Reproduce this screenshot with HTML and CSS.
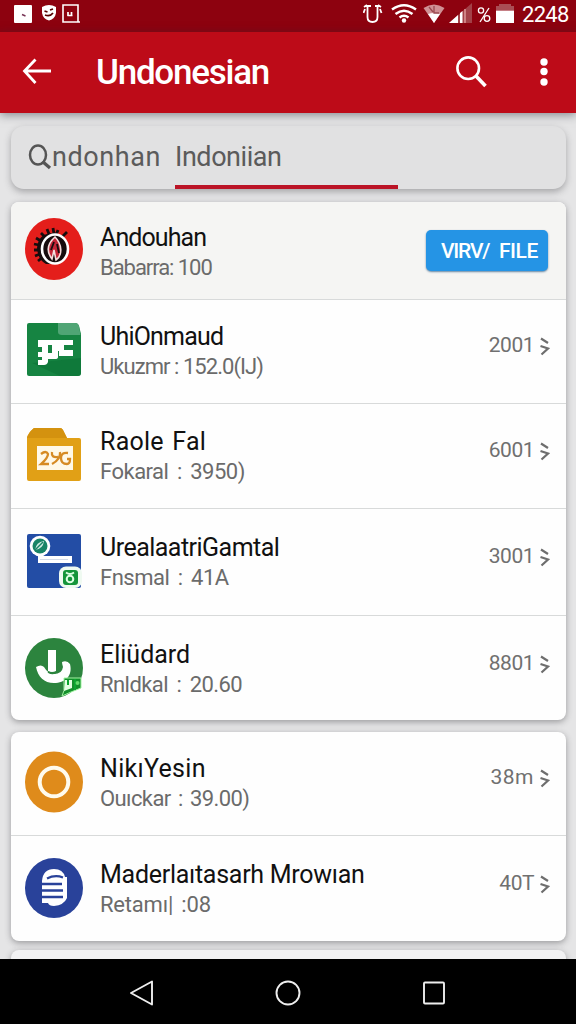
FILE: index.html
```html
<!DOCTYPE html>
<html lang="id">
<head>
<meta charset="utf-8">
<title>Undonesian</title>
<link rel="stylesheet" href="styles.css">
</head>
<body>
<div class="screen">
  <header class="statusbar">
    <svg class="status-left" width="82" height="32" viewBox="0 0 82 32">
      <rect x="14" y="5" width="18" height="18" rx="1" fill="#fff"/>
      <path d="M22 14.500l3.500 1.500" stroke="#735" stroke-width="1.400"/>
      <path d="M42 7q7-4 14 0v6q-1 6-7 7.500q-6-1.500-7-7.500z" fill="#fff"/>
      <path d="M44.500 11l3 1M50 10l3-1M45 15q5 2 8-2" stroke="#500" stroke-width="1.700" fill="none"/>
      <path d="M63 5h15v17H63zM77 22h3" fill="none" stroke="#fff" stroke-width="1.600"/>
      <path d="M68 12v4M71.500 12v4M67.500 15.500h5" fill="none" stroke="#fff" stroke-width="1.700"/>
    </svg>
    <div class="status-right">
      <svg width="156" height="32" viewBox="362 0 156 32">
        <path d="M366.500 6v11q0 5 5 5t5-5V6M365 6h5M374 6h4M364 9l-1.500 4M379 9l1.500 4M363 7l3-2M380 7l-3-2" fill="none" stroke="#fff" stroke-width="1.800"/>
        <g fill="none" stroke="#fff" stroke-width="2.500">
          <path d="M391 9.500q12-8.500 24 0M394.500 14q8.500-6.500 17 0M398.500 17.500q4.500-3.500 9 0"/>
        </g>
        <circle cx="403" cy="20.500" r="2.200" fill="#fff"/>
        <path d="M422.500 8q10.500-7 21 0L433 23z" fill="#d09195"/>
        <path d="M427 14q6-2 12 0L433 23z" fill="#fff"/>
        <path d="M433 6v7h5M428 7l4 5" fill="none" stroke="#9a4a50" stroke-width="1.300"/>
        <path d="M448 23L471 3v20z" fill="#a34148"/>
        <path d="M448 23l9-8v8zM459 13l2.500-2v12H459z" fill="#fff"/>
        <path d="M464 9v14" stroke="#d99" stroke-width="1.500"/>
        <g fill="none" stroke="#fff" stroke-width="1.300"><circle cx="480" cy="10.500" r="2.600"/><circle cx="486" cy="18.500" r="2.800"/><path d="M488 8l-9 14"/></g>
        <path d="M495 8V6h3V4h12v2h3v4h-18z" fill="#a94e55"/>
        <rect x="495" y="10.500" width="18" height="12.500" fill="#fff"/>
      </svg>
      <span class="clock">2248</span>
    </div>
  </header>
  <div class="appbar">
    <svg class="back" width="30" height="30" viewBox="0 0 30 30"><path d="M13.500 2.500L2.500 14 13.500 26M2.500 14H29" fill="none" stroke="#fff" stroke-width="2.800"/></svg>
    <h1 class="apptitle">Undonesian</h1>
    <svg class="find" width="34" height="34" viewBox="0 0 34 34"><circle cx="13.200" cy="13.200" r="10.800" fill="none" stroke="#fff" stroke-width="2.600"/><path d="M20.500 20.500l10 10.500" stroke="#fff" stroke-width="3.600"/></svg>
    <svg class="more" width="10" height="30" viewBox="0 0 10 30" fill="#fff"><circle cx="5" cy="5" r="3.700"/><circle cx="5" cy="14.500" r="3.700"/><circle cx="5" cy="25" r="3.700"/></svg>
  </div>

  <main class="content">
    <div class="searchbar">
      <svg class="lens" width="24" height="26" viewBox="0 0 24 26"><ellipse cx="10" cy="11" rx="8" ry="9.500" fill="none" stroke="#555" stroke-width="2.500"/><path d="M14.500 17.500l7.500 6.500" stroke="#555" stroke-width="3.300"/></svg>
      <span class="query">ndonhan</span>
      <span class="tab">Indoniian</span>
    </div>

    <section class="card">
      <div class="row row-first">
        <svg class="icon" width="60" height="64" viewBox="0 0 60 64">
          <ellipse cx="30" cy="32" rx="29" ry="31" fill="#e41e1b"/>
          <path d="M34 13l-2 5M29 11l1 6M23 12l2 5M17 16l4 4M12 21l5 3M10 27l5 1M10 33h5M11 39l5-2M14 44l5-4M43 15l-5 5" stroke="#160d0e" stroke-width="2.800"/>
          <path d="M30 16q-16 0-17 15 1 12 9 16h8z" fill="#160d0e"/>
          <ellipse cx="31" cy="32" rx="13" ry="14.500" fill="#160d0e" stroke="#fff" stroke-width="2.600"/>
          <path d="M31 20c-8 7-9 14-3 22l2-9 2 10c7-5 6-16-1-23z" fill="#c32436" stroke="#f5dcdc" stroke-width="1.600"/>
          <path d="M30 25l-3 8M33 27l2 9" stroke="#160d0e" stroke-width="1.800"/>
        </svg>
        <div class="texts"><div class="name n1">Andouhan</div><div class="sub s1">Babarra: 100</div></div>
        <button class="viewfile"><span class="view">VIRV/</span><span>FILE</span></button>
      </div>
      <div class="row">
        <svg class="icon" width="60" height="64" viewBox="0 0 60 64">
          <path d="M5 5h46q3 0 4 3l2 8v39q0 3-3 3H5q-2 0-2-2V7q0-2 2-2z" fill="#168442"/>
          <path d="M34 5h17q3 0 4 3l1.500 9H38q-4 0-4-3z" fill="#50a575"/>
          <path d="M8 45l28 13h18q3 0 3-3V40z" fill="#0b7136" opacity=".6"/>
          <path d="M14 22h20v17q0 2-3 2h-7v3q-1 3-4 3h-6v-5h4v-3h-4v-5h4v-5h-4zM24 27v8h4v-8z" fill="#fff"/>
          <path d="M33 22h16v5H40v5h9v6H35v-5h-2z" fill="#fff"/>
        </svg>
        <div class="texts"><div class="name n2">UhiOnmaud</div><div class="sub s2">Ukuzmr : 152.0(IJ)</div></div>
        <div class="amount">2001<svg class="chev" width="10" height="20" viewBox="0 0 10 20"><path d="M1 1.500l7 4.500M.5 9l7.500 2.500-6.500 6" fill="none" stroke="#6e6e6e" stroke-width="2.200"/></svg></div>
      </div>
      <div class="row">
        <svg class="icon" width="60" height="64" viewBox="0 0 60 64">
          <path d="M10 5h26q2 0 3 2l4 8h12q2 0 2 2v39q0 2-2 2H5q-2 0-2-2V15q1-5 7-10z" fill="#e1a016"/>
          <path d="M10 5h26q2 0 3 2l4 8H3q1-5 7-10z" fill="#d4920f"/>
          <rect x="13" y="23" width="36" height="24" fill="#fff9e8"/>
          <path d="M17 31q5-4 7 0 0 4-7 10h8M28 29q-1 6 6 5M36 29q1 7-8 12M44 30q-7-1-7 5t6 6q3 0 3-5h-3" fill="none" stroke="#d68b24" stroke-width="2.300"/>
        </svg>
        <div class="texts"><div class="name n3">Raole Fal</div><div class="sub s3">Fokaral : 3950)</div></div>
        <div class="amount">6001<svg class="chev" width="10" height="20" viewBox="0 0 10 20"><path d="M1 1.500l7 4.500M.5 9l7.500 2.500-6.500 6" fill="none" stroke="#6e6e6e" stroke-width="2.200"/></svg></div>
      </div>
      <div class="row row-tall">
        <svg class="icon" width="60" height="64" viewBox="0 0 60 64">
          <rect x="3" y="5" width="54" height="54" rx="2" fill="#234da5"/>
          <path d="M14 27h34v7H14z" fill="#fff"/><path d="M16 30.500h28" stroke="#d4dbe8" stroke-width="1.200"/>
          <circle cx="16" cy="17" r="10.300" fill="#fff"/><circle cx="16" cy="17" r="7.500" fill="#198466"/><path d="M11 21q1-8 9-9-1 8-9 9" fill="#d2ebe3"/><path d="M11 21l8-8" stroke="#198466" stroke-width="1.500"/>
          <rect x="35" y="37.500" width="23" height="21.500" rx="7" fill="#effaf1"/>
          <rect x="39" y="41" width="15" height="15" rx="3" fill="#14953a"/><circle cx="46" cy="50" r="3.300" fill="none" stroke="#dcffe3" stroke-width="2"/><path d="M42 43.500q4 3 8 0" stroke="#dcffe3" stroke-width="1.800" fill="none"/>
        </svg>
        <div class="texts"><div class="name n4">UrealaatriGamtal</div><div class="sub s4">Fnsmal : 41A</div></div>
        <div class="amount">3001<svg class="chev" width="10" height="20" viewBox="0 0 10 20"><path d="M1 1.500l7 4.500M.5 9l7.500 2.500-6.500 6" fill="none" stroke="#6e6e6e" stroke-width="2.200"/></svg></div>
      </div>
      <div class="row row-last">
        <svg class="icon" width="60" height="64" viewBox="0 0 60 64">
          <ellipse cx="30" cy="32" rx="29" ry="30" fill="#2c843e"/>
          <path d="M12 31q5-3 8 0 4 7 10 7 8 0 9-7-1-3-1-5 5-2 8 2c3 12-5 19-16 19-10 0-16-6-18-16z" fill="#fff"/>
          <path d="M24 14h8v21q-4 2-8 0z" fill="#fff"/><path d="M33 24v12q-4 3-9 0" fill="none" stroke="#2c843e" stroke-width="1.500"/>
          <path d="M40 42h17v10l-10 4-9 4q3-6 2-10z" fill="#13902b" stroke="#a2f3a2" stroke-width="1"/>
          <path d="M41 44h7v8l-8 3z" fill="#e4ffe3"/><path d="M44 44v5M51 43v11" stroke="#0ba630" stroke-width="2"/><circle cx="53.500" cy="47" r="2" fill="#62d96b"/>
        </svg>
        <div class="texts"><div class="name n5">Eliüdard</div><div class="sub s5">Rnldkal : 20.60</div></div>
        <div class="amount">8801<svg class="chev" width="10" height="20" viewBox="0 0 10 20"><path d="M1 1.500l7 4.500M.5 9l7.500 2.500-6.500 6" fill="none" stroke="#6e6e6e" stroke-width="2.200"/></svg></div>
      </div>
    </section>

    <section class="card">
      <div class="row row-sixth">
        <svg class="icon" width="60" height="64" viewBox="0 0 60 64"><ellipse cx="30" cy="32" rx="29" ry="30.500" fill="#df8b1b"/><circle cx="30" cy="32" r="14.300" fill="none" stroke="#fffbed" stroke-width="4"/></svg>
        <div class="texts"><div class="name n6">NikıYesin</div><div class="sub s6">Ouıckar : 39.00)</div></div>
        <div class="amount wide">38m<svg class="chev" width="10" height="20" viewBox="0 0 10 20"><path d="M1 1.500l7 4.500M.5 9l7.500 2.500-6.500 6" fill="none" stroke="#6e6e6e" stroke-width="2.200"/></svg></div>
      </div>
      <div class="row row-last">
        <svg class="icon" width="60" height="64" viewBox="0 0 60 64">
          <ellipse cx="30" cy="32" rx="29" ry="30" fill="#29429a"/>
          <path d="M18 25q1-12 12-12 9 0 11 8h2v21q-3 7-13 8-5 0-6-3h-6z" fill="#fff"/>
          <path d="M23 22.500q8-4 16-1M18 28h20M18 34.500h21M18 41h21" stroke="#29429a" stroke-width="2.300" fill="none"/>
        </svg>
        <div class="texts"><div class="name n7">Maderlaıtasarh Mrowıan</div><div class="sub s7">Retamı| :08</div></div>
        <div class="amount">40T<svg class="chev" width="10" height="20" viewBox="0 0 10 20"><path d="M1 1.500l7 4.500M.5 9l7.500 2.500-6.500 6" fill="none" stroke="#6e6e6e" stroke-width="2.200"/></svg></div>
      </div>
    </section>
    <section class="card card-peek"></section>
  </main>

  <nav class="navbar">
    <svg width="24" height="26" viewBox="0 0 24 26"><path d="M22 1.500v23L1 13z" fill="none" stroke="#eee" stroke-width="1.900" stroke-linejoin="round"/></svg>
    <svg width="26" height="26" viewBox="0 0 26 26"><circle cx="13" cy="13" r="11.500" fill="none" stroke="#eee" stroke-width="1.900"/></svg>
    <svg width="24" height="26" viewBox="0 0 24 26"><rect x="2" y="2.500" width="20" height="21" rx="1" fill="none" stroke="#eee" stroke-width="1.900"/></svg>
  </nav>
</div>
</body>
</html>
```
FILE: styles.css
```css
* { box-sizing: border-box; }
body { margin: 0; font-family: Roboto, "Liberation Sans", sans-serif; }
.screen { width: 576px; height: 1024px; display: flex; flex-direction: column; overflow: hidden; background: #e5e5e6; }
svg { display: block; flex: none; }

.statusbar { height: 32px; flex: none; display: flex; justify-content: space-between; background: #8d020f; color: #fff; }
.status-right { display: flex; gap: 3px; padding-right: 7px; }
.clock { width: 47px; font-size: 22px; line-height: 30px; letter-spacing: -0.7px; }

.appbar { position: relative; z-index: 1; height: 81px; flex: none; display: flex; align-items: center; padding: 0 27px 2px 22px; background: #bd0b18; box-shadow: 0 2px 9px rgba(40, 45, 55, .5); }
.apptitle { margin: 2px 0 0 44px; flex: 1; color: #fff; font-size: 35px; font-weight: 500; line-height: 42px; letter-spacing: -1.25px; }
.find { margin-right: 50px; }

.content { flex: 1; min-height: 0; overflow: hidden; display: flex; flex-direction: column; padding: 13px 11px 0; }
.searchbar { width: 555px; height: 63px; flex: none; display: flex; padding-left: 17px; margin-bottom: 13px; border-radius: 13px; background: #e1e1e2; box-shadow: 0 3px 7px rgba(50, 50, 55, .35); color: #5b5b5b; font-size: 27px; line-height: 62px; }
.lens { margin-top: 18px; }
.query { width: 123px; letter-spacing: 0.6px; }
.tab { width: 223px; height: 63px; border-bottom: 4px solid #bb1427; letter-spacing: -0.45px; }

.card { width: 555px; flex: none; margin-bottom: 12px; border-radius: 8px; background: #fefefe; box-shadow: 0 2px 6px rgba(50, 50, 55, .42); overflow: hidden; }
.card-peek { height: 30px; margin-top: -3px; background: #f2f2f3; }
.row { height: 104px; display: flex; padding: 18px 16px 0 13px; border-bottom: 1.5px solid #d8dada; }
.row-first { height: 98px; padding-top: 15px; background: #f5f5f3; }
.row-tall { height: 107px; padding-top: 20px; }
.row:nth-child(3) { height: 105px; padding-top: 19px; }
.row-last { height: 104px; padding-top: 20px; border-bottom: 0; }
.row-sixth + .row-last { height: 105px; }
.texts { flex: 1; margin: 4px 0 0 16px; white-space: nowrap; }
.row-first .texts { margin-top: 6px; }
.name { color: #111; font-size: 25px; line-height: 30px; letter-spacing: -0.4px; }
.sub { color: #6b6b6b; font-size: 22px; line-height: 29px; letter-spacing: -0.7px; }
.n1 { letter-spacing: -0.9px; }
.n2 { letter-spacing: -0.8px; }
.n3 { letter-spacing: 0.25px; word-spacing: 2px; }
.n4 { letter-spacing: -0.52px; }
.n5 { letter-spacing: 0; }
.n6 { letter-spacing: 0.3px; }
.n7 { letter-spacing: -0.27px; }
.s1 { letter-spacing: -1.05px; }
.s2 { letter-spacing: -0.95px; }
.s3, .s4 { letter-spacing: -0.5px; word-spacing: 3.5px; }
.s5 { letter-spacing: -0.55px; word-spacing: 3.5px; }
.s6 { letter-spacing: -0.6px; word-spacing: 2.5px; }
.s7 { letter-spacing: -0.2px; word-spacing: 3px; }
.amount { display: flex; align-items: flex-start; gap: 6px; color: #707070; font-size: 21px; line-height: 24px; letter-spacing: -0.5px; padding-top: 15px; }
.wide { letter-spacing: 0.5px; }
.chev { margin-top: 4px; }
.viewfile { width: 122px; height: 41px; display: flex; align-items: center; justify-content: space-between; padding: 0 10px 0 15px; margin: 13px 2px 0 0; border: 0; border-radius: 5px; background: #2594e5; box-shadow: 0 1px 2px rgba(0, 60, 110, .6); color: #fff; font: 500 21px Roboto, "Liberation Sans", sans-serif; letter-spacing: -0.4px; }
.view { letter-spacing: -1.2px; }

.navbar { height: 65px; flex: none; display: flex; align-items: center; justify-content: center; gap: 121px; background: #000; padding: 3px 0 0 0; }
```
